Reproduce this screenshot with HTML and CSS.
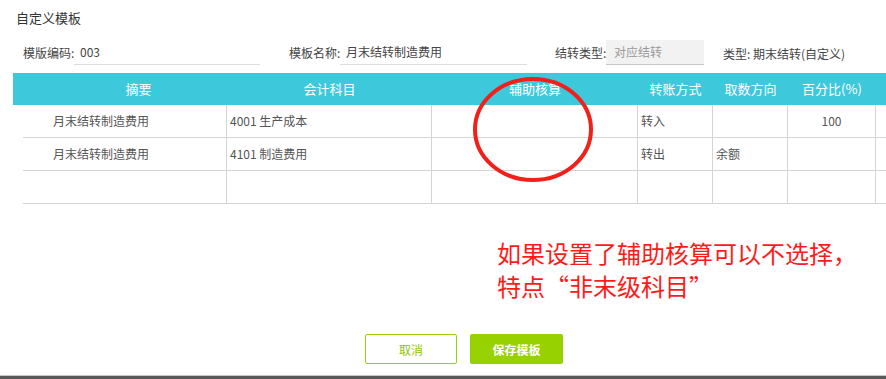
FILE: index.html
```html
<!DOCTYPE html>
<html lang="zh-CN">
<head>
  <meta charset="UTF-8"/>
  <title>自定义模板</title>
  <link rel="stylesheet" href="styles.css">
</head>
<body>
  <div class="page">
    <h1 class="page-title">自定义模板</h1>

    <!-- Template fields -->
    <div class="form-row">
      <div class="field">
        <label>模版编码:</label>
        <span class="input input-code">003</span>
      </div>
      <div class="field">
        <label>模板名称:</label>
        <span class="input input-name">月末结转制造费用</span>
      </div>
      <div class="field">
        <label>结转类型:</label>
        <span class="input input-disabled">对应结转</span>
      </div>
      <div class="field-info">类型: 期末结转(自定义)</div>
    </div>

    <!-- Entries grid -->
    <div class="grid">
      <div class="row grid-head">
        <div class="c c0"></div>
        <div class="c c1">摘要</div>
        <div class="c c2">会计科目</div>
        <div class="c c3">辅助核算</div>
        <div class="c c4">转账方式</div>
        <div class="c c5">取数方向</div>
        <div class="c c6">百分比(%)</div>
        <div class="c c7"></div>
      </div>
      <div class="grid-body">
        <div class="row">
          <div class="c c0"></div>
          <div class="c c1">月末结转制造费用</div>
          <div class="c c2">4001 生产成本</div>
          <div class="c c3"></div>
          <div class="c c4">转入</div>
          <div class="c c5"></div>
          <div class="c c6 num">100</div>
          <div class="c c7"></div>
        </div>
        <div class="row">
          <div class="c c0"></div>
          <div class="c c1">月末结转制造费用</div>
          <div class="c c2">4101 制造费用</div>
          <div class="c c3"></div>
          <div class="c c4">转出</div>
          <div class="c c5">余额</div>
          <div class="c c6 num"></div>
          <div class="c c7"></div>
        </div>
        <div class="row">
          <div class="c c0"></div>
          <div class="c c1"></div>
          <div class="c c2"></div>
          <div class="c c3"></div>
          <div class="c c4"></div>
          <div class="c c5"></div>
          <div class="c c6"></div>
          <div class="c c7"></div>
        </div>
      </div>
      <!-- annotation ring over the 辅助核算 column -->
      <svg class="mark-ring" width="124" height="109" viewBox="0 0 124 109">
        <ellipse cx="62" cy="54.5" rx="58" ry="50.5" fill="none" stroke="#f2201a" stroke-width="4"/>
      </svg>
    </div>

    <p class="note">如果设置了辅助核算可以不选择，<br>特点“非末级科目”</p>

    <div class="actions">
      <button class="btn btn-cancel">取消</button>
      <button class="btn btn-save">保存模板</button>
    </div>
  </div>
  <div class="bottom-bar"></div>
</body>
</html>
```

FILE: styles.css
```css
*, *::before, *::after { box-sizing: border-box; }

html, body {
  margin: 0; padding: 0;
  background: #fff;
  overflow: hidden;
}
body {
  font-family: "Noto Sans CJK SC", "Noto Sans", sans-serif;
  color: #555;
  font-size: 12px;
}

.page {
  width: 900px;
  height: 375px;
}

.page-title {
  margin: 0;
  padding: 8px 0 0 16px;
  font-size: 13px;
  font-weight: normal;
  line-height: 20px;
  color: #333;
}

/* Form row */
.form-row {
  display: flex;
  align-items: flex-start;
  margin-top: 12px;
  padding-left: 23px;
  height: 25px;
}
.field {
  display: flex;
  align-items: center;
  height: 25px;
}
.field label {
  width: 51px;
  color: #444;
  line-height: 25px;
  white-space: nowrap;
}
.input {
  display: block;
  height: 25px;
  line-height: 24px;
  padding-left: 6px;
  border-bottom: 1px solid #ddd;
  color: #444;
}
.input-code { width: 186px; margin-right: 29px; }
.input-name { width: 187px; margin-right: 28px; }
.input-disabled {
  width: 98px;
  padding-left: 8px;
  background: #f2f2f2;
  border-bottom-color: #c8c8c8;
  color: #999;
  margin-right: 19px;
}
.field-info {
  padding-top: 4px;
  line-height: 20px;
  color: #444;
  white-space: nowrap;
}

/* Grid */
.grid {
  position: relative;
  margin: 8px 0 0 13px;
}
.row {
  display: flex;
  height: 33px;
}
.c {
  flex: none;
  height: 100%;
  line-height: 32px;
  padding: 0 3px;
  white-space: nowrap;
  overflow: hidden;
}
.c0 { width: 37px; }
.c1 { width: 177px; }
.c2 { width: 205px; }
.c3 { width: 206px; }
.c4 { width: 75px; }
.c5 { width: 75px; }
.c6 { width: 88px; }
.c7 { width: 40px; }

.grid-head {
  height: 32px;
  background: #3ec8dc;
}
.grid-head .c {
  color: #fff;
  font-size: 13px;
  text-align: center;
  line-height: 31px;
}

.grid-body { margin-left: 10px; }
.grid-body .c0 { width: 27px; }
.grid-body .row {
  border-bottom: 1px solid #d4d4d4;
}
.grid-body .c {
  height: 32px;
  line-height: 32px;
  color: #555;
}
.grid-body .c1, .grid-body .c2, .grid-body .c3,
.grid-body .c4, .grid-body .c5, .grid-body .c6 {
  border-right: 1px solid #d4d4d4;
}
.grid-body .num { text-align: center; }

.mark-ring {
  position: absolute;
  left: 458px;
  top: 2px;
}

/* Red note */
.note {
  margin: 32px 0 0 497px;
  font-size: 24px;
  line-height: 33px;
  color: #ff1a1a;
  white-space: nowrap;
}

/* Buttons */
.actions {
  display: flex;
  gap: 13px;
  margin-top: 32px;
  padding-left: 365px;
}
.btn {
  width: 92px;
  height: 30px;
  border-radius: 2px;
  font-family: inherit;
  font-size: 12px;
  cursor: pointer;
}
.btn-cancel {
  background: #fff;
  border: 1px solid #9ad200;
  color: #8fc400;
}
.btn-save {
  width: 93px;
  background: #98d100;
  border: 1px solid #98d100;
  color: #fff;
  font-weight: bold;
}

.bottom-bar {
  height: 4px;
  border-top: 1px solid #c6c6c6;
  background: #595959;
}
```
